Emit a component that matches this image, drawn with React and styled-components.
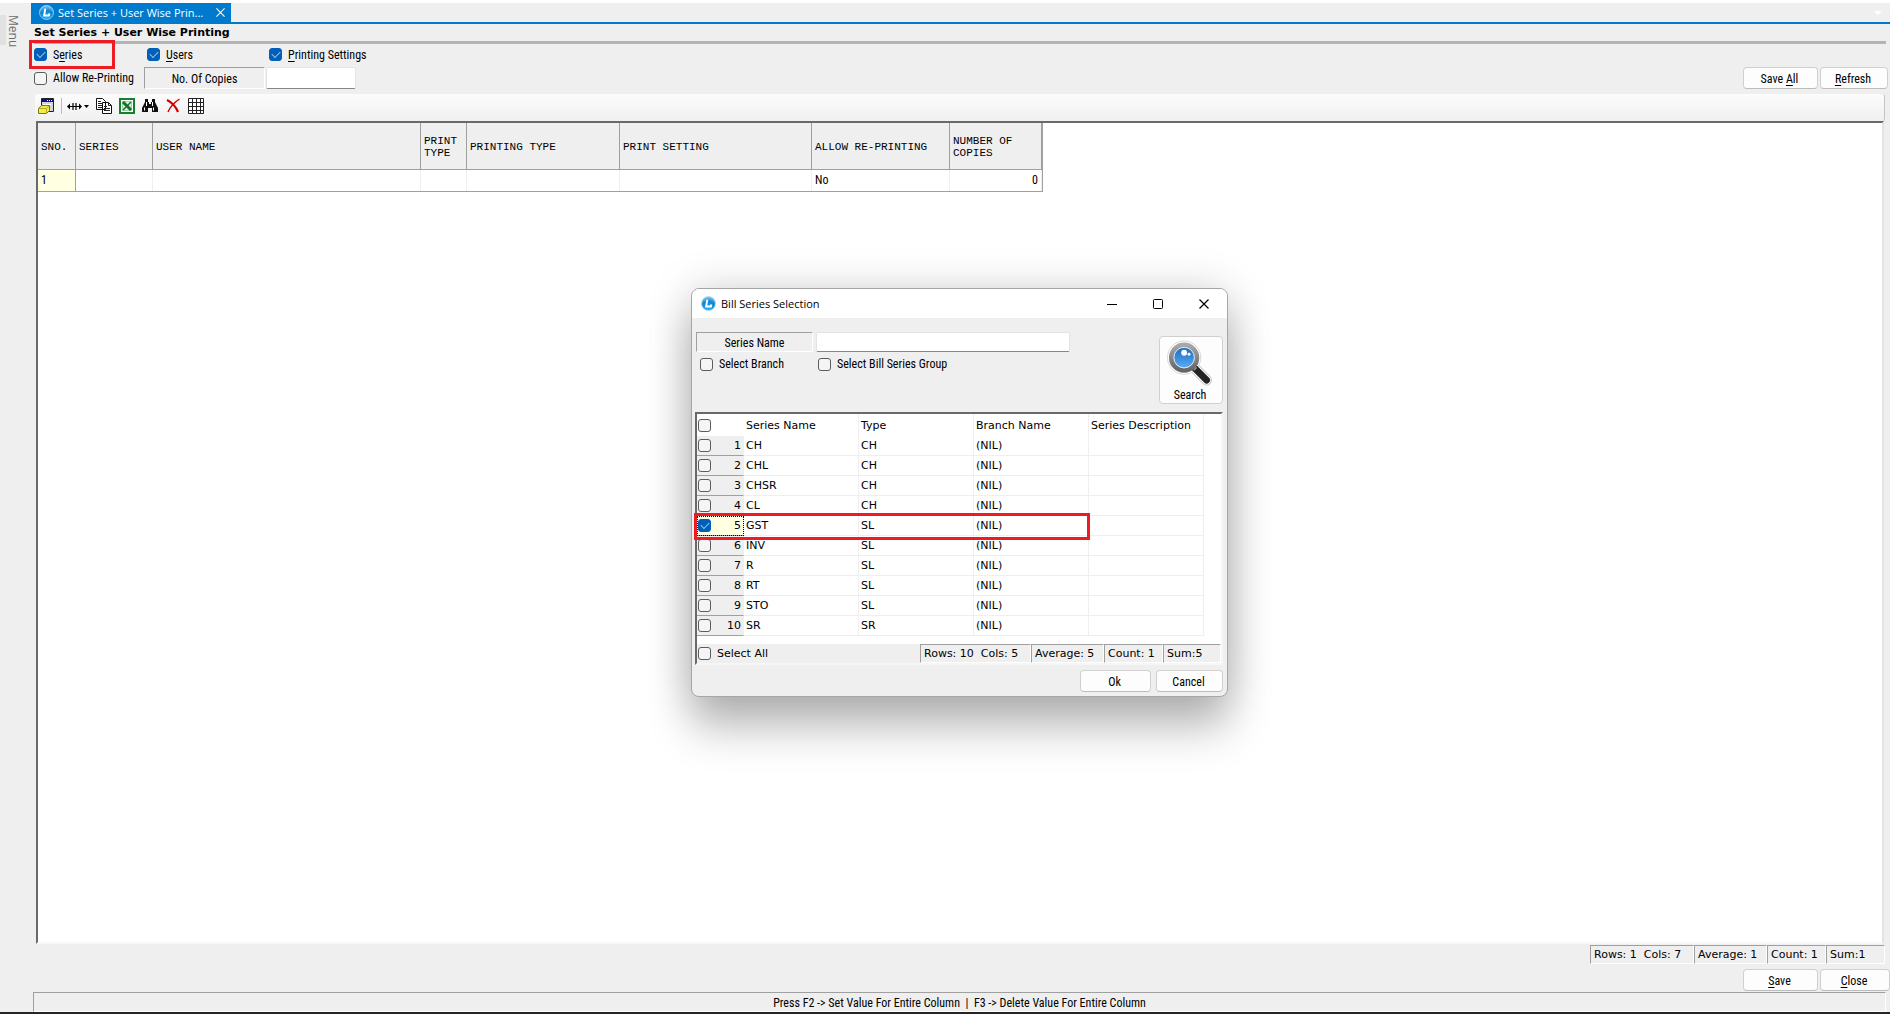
import React, { useState } from "react";
import styled, { createGlobalStyle, css } from "styled-components";

const ui = `"Roboto Condensed", Roboto, "Liberation Sans", sans-serif`;
const wide = `Verdana, "DejaVu Sans", sans-serif`;
const title = `"Segoe UI", "Open Sans", sans-serif`;
const mono = `"Courier New", "Liberation Mono", monospace`;

const c = {
  face: "#efefef",
  dark: "#a0a0a0",
  darker: "#696969",
  light: "#e3e3e3",
  blue: "#007acc",
  check: "#005fb8",
  red: "#ed1c24",
};

const Global = createGlobalStyle`
  * { box-sizing: border-box; }
  body { margin: 0; background: ${c.face}; color: #000; font: 12px/16px ${ui}; }
  button, input { font: inherit; color: inherit; }
`;

const Page = styled.div`
  display: flex;
  flex-direction: column;
  min-height: 100vh;
  border-top: 3px solid #fff;
  border-bottom: 2px solid #272425;
  background: ${c.face};
`;

const Workspace = styled.div`
  display: flex;
  flex: 1;
`;

const Rail = styled.nav`
  flex: 0 0 31px;
  padding-top: 12px;
`;

const MenuTab = styled.button`
  display: block;
  height: 30px;
  padding: 0 0 2px 1px;
  border: 0;
  border-left: 6px solid #e1e1e1;
  background: none;
  color: #6d6d6d;
  font: 12px/12px ${title};
  writing-mode: vertical-rl;
`;

const Screen = styled.main`
  display: flex;
  flex: 1;
  flex-direction: column;
  min-width: 0;
`;

const TabStrip = styled.div`
  display: flex;
  align-items: center;
  justify-content: space-between;
  height: 21px;
  padding-right: 8px;
  border-bottom: 2px solid ${c.blue};
`;

const Tab = styled.div`
  display: flex;
  align-items: center;
  width: 200px;
  height: 19px;
  padding: 0 5px 0 8px;
  background: ${c.blue};
  color: #fff;
  font: 11px/16px ${title};
  white-space: nowrap;
`;

const TabText = styled.span`
  flex: 1;
  margin-left: 4px;
`;

const GlyphButton = styled.button`
  display: grid;
  place-items: center;
  width: ${(p) => p.$w}px;
  height: ${(p) => p.$h}px;
  padding: 0;
  border: 0;
  background: none;
`;

const Heading = styled.h1`
  margin: 0 4px 0 3px;
  padding-top: 1px;
  border-bottom: 3px solid #b4b4b4;
  font: bold 11px/16px ${wide};
`;

const Options = styled.div`
  display: flex;
  flex-direction: column;
  height: 50px;
  padding: 0 2px 0 3px;
`;

const FlagRow = styled.div`
  display: grid;
  grid-template-columns: 113px 122px auto;
  align-items: center;
  height: 21px;
`;

const CopyRow = styled.div`
  display: flex;
  align-items: center;
  height: 26px;
`;

const Check = styled.label`
  position: relative;
  display: flex;
  align-items: center;
  gap: 6px;
  min-width: ${(p) => p.$w || 0}px;
  font: ${(p) => (p.$wide ? `11px/16px ${wide}` : "inherit")};
  white-space: nowrap;
`;

const markStyle = css`
  position: absolute;
  z-index: 1;
  border: 3px solid ${c.red};
  pointer-events: none;
  content: "";
`;

const MarkedCheck = styled(Check)`
  &::after {
    ${markStyle}
    inset: -7px 32px -6px -5px;
  }
`;

const Box = styled.input.attrs({ type: "checkbox" })`
  display: grid;
  flex: none;
  place-items: center;
  width: 13px;
  height: 13px;
  margin: 0;
  border: 1px solid #5c5c5c;
  border-radius: 3px;
  background: #f5f5f5;
  appearance: none;
  &:checked {
    border-color: ${c.check};
    background: ${c.check};
  }
  &:checked::after {
    width: 7px;
    height: 4px;
    margin-bottom: 2px;
    border: solid #9cc3e6;
    border-width: 0 0 1px 1px;
    transform: rotate(-45deg);
    content: "";
  }
`;

const Key = styled.span`
  text-decoration: underline;
  text-underline-offset: 2px;
`;

const Caption = styled.label`
  display: grid;
  place-items: center;
  width: ${(p) => p.$w}px;
  height: ${(p) => p.$h}px;
  padding-top: 2px;
  border: 1px solid;
  border-color: ${c.dark} #fff #fff ${c.dark};
`;

const Field = styled.input`
  width: ${(p) => p.$w}px;
  height: ${(p) => p.$h}px;
  margin-left: ${(p) => p.$gap}px;
  padding: 0 4px;
  border: 1px solid ${c.light};
  border-bottom-color: #868686;
  border-radius: 2px;
  background: #fff;
`;

const Actions = styled.div`
  display: flex;
  gap: ${(p) => p.$gap || 2}px;
  justify-content: flex-end;
  margin-left: auto;
`;

const Button = styled.button`
  width: ${(p) => p.$w}px;
  height: 22px;
  padding: 2px 2px 0 0;
  border: 1px solid #d0d0d0;
  border-bottom-color: #bcbcbc;
  border-radius: 4px;
  background: #fdfdfd;
  line-height: 16px;
`;

const Toolbar = styled.div`
  display: flex;
  align-items: center;
  gap: 7px;
  height: 27px;
  margin: 0 5px 0 4px;
  padding: 0 3px 4px;
  border-radius: 3px;
  background: linear-gradient(#fcfcfc, #f0f0f0);
  border-right: 1px solid #c4c4c4;
`;

const Divider = styled.span`
  width: 1px;
  height: 16px;
  margin-right: -2px;
  background: #bdbdbd;
`;

const Sheet = styled.section`
  flex: 1;
  margin: 0 6px 0 5px;
  border: 2px solid;
  border-color: ${c.darker} ${c.light} #f8f8f8 ${c.darker};
  background: #fff;
`;

const GridTable = styled.table`
  border-collapse: separate;
  border-spacing: 0;
  table-layout: fixed;
  width: 1005px;
  border-right: 1px solid ${c.dark};
  border-bottom: 1px solid ${c.dark};
`;

const GridHead = styled.th`
  height: 47px;
  padding: 1px 0 0 3px;
  border: solid ${c.dark};
  border-width: 0 1px 1px 0;
  background: ${c.face};
  font: 11px/12px ${mono};
  text-align: left;
`;

const GridCell = styled.td`
  height: 21px;
  padding: 0 3px 2px;
  border-right: 1px solid ${c.face};
  text-align: ${(p) => p.$align || "left"};
  ${(p) => p.$mark && css`
    border-color: ${c.dark};
    background: #ffffe1;
  `}
`;

const StatusLine = styled.div`
  display: flex;
  justify-content: flex-end;
  margin: ${(p) => (p.$page ? "1px 5px 5px 0" : "0")};
  font: 11px/16px ${wide};
`;

const Stat = styled.span`
  width: ${(p) => p.$w}px;
  padding: 1px 0 0 3px;
  border: 1px solid;
  border-color: ${c.dark} #fff #fff ${c.dark};
  white-space: pre;
`;

const Footer = styled.footer`
  height: 20px;
  margin: 1px 4px 0 2px;
  border: 1px solid;
  border-color: ${c.dark} #fff #fff ${c.dark};
  line-height: 20px;
  text-align: center;
  white-space: pre;
`;

const Window = styled.section`
  position: absolute;
  top: 288px;
  left: 691px;
  display: flex;
  flex-direction: column;
  width: 537px;
  border: 1px solid #a6a6a6;
  border-radius: 8px;
  background: ${c.face};
  box-shadow: 0 32px 44px rgba(0, 0, 0, 0.24), 0 2px 44px rgba(0, 0, 0, 0.18);
`;

const TitleBar = styled.header`
  display: flex;
  align-items: center;
  height: 29px;
  padding-left: 9px;
  border-radius: 7px 7px 0 0;
  background: #fff;
  font: 11px/16px ${title};
`;

const WindowTitle = styled.h2`
  flex: 1;
  margin: 0 0 0 5px;
  font: inherit;
`;

const SearchForm = styled.form`
  display: flex;
  justify-content: space-between;
  height: 94px;
  padding: 14px 4px 0;
`;

const Criteria = styled.div`
  display: flex;
  flex-direction: column;
  gap: 2px;
`;

const Line = styled.div`
  display: flex;
  align-items: center;
  height: 20px;
  padding-left: ${(p) => p.$inset || 0}px;
`;

const SearchButton = styled.button`
  display: flex;
  flex-direction: column;
  align-items: center;
  width: 64px;
  height: 68px;
  margin-top: 4px;
  padding: 3px 2px 0 0;
  border: 1px solid #d0d0d0;
  border-radius: 4px;
  background: #fdfdfd;
`;

const ListFrame = styled.div`
  margin: 0 4px 0 3px;
  border: 2px solid;
  border-color: ${c.darker} #f6f6f6 #f6f6f6 ${c.darker};
  background: #fff;
`;

const List = styled.table`
  border-collapse: separate;
  border-spacing: 0;
  table-layout: fixed;
  width: 507px;
  margin-bottom: 8px;
  font: 11px/16px ${wide};
`;

const ListHead = styled.th`
  height: 22px;
  padding: 1px 0 0 ${(p) => (p.$box ? 1 : 2)}px;
  border-right: 1px solid ${(p) => (p.$box ? "#fff" : c.face)};
  font-weight: normal;
  text-align: left;
  white-space: nowrap;
`;

const ListRow = styled.tr`
  position: relative;
  ${(p) => p.$marked && css`
    &::after {
      ${markStyle}
      inset: -3px 114px -4px -3px;
    }
  `}
`;

const ListCell = styled.td`
  height: 20px;
  padding: 0 0 0 2px;
  border: solid ${c.face};
  border-width: 0 1px 1px 0;
`;

const RowHead = styled.th`
  height: 20px;
  padding: 0;
  border-right: 1px solid ${c.face};
  border-bottom: 1px solid ${c.dark};
  background: ${(p) => (p.$on ? "#ffffe1" : c.face)};
  font-weight: normal;
  ${(p) => p.$on && css`
    outline: 1px dotted #000;
    outline-offset: -1px;
  `}
`;

const RowHeadInner = styled.label`
  display: flex;
  align-items: center;
  justify-content: space-between;
  padding: 0 2px 0 1px;
`;

const ListFoot = styled.div`
  display: flex;
  align-items: center;
  justify-content: space-between;
  padding-left: 1px;
  background: ${c.face};
`;

const WindowActions = styled(Actions)`
  margin: 5px 4px 4px 0;
`;

const Logo = ({ id }) => (
  <svg width="15" height="15" viewBox="0 0 15 15" aria-hidden="true">
    <defs>
      <radialGradient id={id} cx=".5" cy=".85" r=".9">
        <stop offset="0" stopColor="#27b4f5" />
        <stop offset=".55" stopColor="#0d83d6" />
        <stop offset="1" stopColor="#9fd6f7" />
      </radialGradient>
    </defs>
    <circle cx="7.500" cy="7.500" r="7" fill={`url(#${id})`} stroke="#a9dcf8" strokeWidth=".8" />
    <path d="M6.300 3.600 5.100 10.500h4.800l.4-2" fill="none" stroke="#fff" strokeWidth="1.900" />
  </svg>
);

const Cross = ({ size, color }) => (
  <svg width={size} height={size} viewBox="0 0 10 10" aria-hidden="true">
    <path d="M.5.5l9 9M9.500.5l-9 9" stroke={color} strokeWidth="1.200" />
  </svg>
);

const FormIcon = () => (
  <svg width="16" height="16" viewBox="0 0 16 16" aria-hidden="true">
    <path d="M3.500.5h12v13h-12z" fill="#d4d4d4" stroke="#222" />
    <path d="M3 1h12v3H3z" fill="#10108c" />
    <path d="M9 2.500h1M11 2.500h1M13 2.500h1" stroke="#fff" />
    <path d="M5 6.500h8" stroke="#fff" />
    <path d="M.5 10.500l3-3h8v5l-3 3h-8z" fill="#f2ea4a" stroke="#7d7a12" />
    <path d="M1 10.500h7.500v5M8.500 10.500l3-3" fill="none" stroke="#b5ae20" />
  </svg>
);
const WidthIcon = () => (
  <svg width="22" height="16" viewBox="0 0 22 16" aria-hidden="true">
    <path d="M1 8.500h13" stroke="#000" strokeWidth="1" />
    <path d="M6 5v7M9 5v7" stroke="#000" strokeWidth="1.200" />
    <path d="M0 8.500l3-3v6zM15 8.500l-3-3v6zM17 7h5l-2.500 3z" fill="#000" />
  </svg>
);
const CopyIcon = () => (
  <svg width="16" height="16" viewBox="0 0 16 16" aria-hidden="true">
    <path d="M.5.5h6l3 3v8h-9zM6.500 4.500h6l3 3v8h-9z" fill="#fff" stroke="#111" />
    <path d="M2 3.500h3M2 5.500h4M2 7.500h4M2 9.500h4M8 8.500h3M8 10.500h6M8 12.500h6M12.500 4.500v3h3" stroke="#222" fill="none" />
  </svg>
);
const ExcelIcon = () => (
  <svg width="16" height="16" viewBox="0 0 16 16" aria-hidden="true">
    <path d="M1 1h14v14H1z" fill="#fff" stroke="#14822a" strokeWidth="2" />
    <path d="M3.500 3.500h9v9h-9z" fill="#d8efd9" stroke="#5aa865" strokeDasharray="1 1" />
    <path d="M4 4l8 8" stroke="#14702a" strokeWidth="3" />
    <path d="M12 4l-8 8" stroke="#14702a" strokeWidth="1.500" />
  </svg>
);
const FindIcon = () => (
  <svg width="16" height="16" viewBox="0 0 16 16" aria-hidden="true">
    <path d="M3 1h3v3h1v2h2V4h1V1h3v3l3 6v4h-6v-4H6v4H0v-4l3-6z" fill="#111" />
    <path d="M2.500 9.500v3M4.500 4v4M10.500 4v4M11.500 9.500v3" stroke="#fff" />
  </svg>
);
const DeleteIcon = () => (
  <svg width="15" height="15" viewBox="0 0 15 15" aria-hidden="true">
    <path d="M1 2C5 4 10 9 12 14" fill="none" stroke="#d40000" strokeWidth="2.200" />
    <path d="M13.500 1C9 4 4 9 2 14" fill="none" stroke="#d40000" strokeWidth="1.500" />
  </svg>
);
const TableIcon = () => (
  <svg width="16" height="16" viewBox="0 0 16 16" aria-hidden="true">
    <path d="M.5.5h15v15H.5zM4.500 0v16M8.500 0v16M12.500 0v16M0 4.500h16M0 8.500h16M0 12.500h16" fill="#fff" stroke="#222" />
  </svg>
);
const LensIcon = () => (
  <svg width="48" height="48" viewBox="0 0 48 48" aria-hidden="true">
    <defs>
      <linearGradient id="glass" x1="0" y1="0" x2="0" y2="1">
        <stop offset="0" stopColor="#1463b4" />
        <stop offset="1" stopColor="#62b3ff" />
      </linearGradient>
      <linearGradient id="rim" x1="0" y1="0" x2="0" y2="1">
        <stop offset="0" stopColor="#a8a8a8" />
        <stop offset="1" stopColor="#666" />
      </linearGradient>
    </defs>
    <path d="M28 28L41 41" stroke="#ccc" strokeWidth="11" strokeLinecap="round" />
    <path d="M28 28L41 41" stroke="#fff" strokeWidth="9" strokeLinecap="round" />
    <circle cx="18" cy="18" r="17" fill="#fff" stroke="#d6d6d6" />
    <path d="M29 29L41 41" stroke="#242424" strokeWidth="7" strokeLinecap="round" />
    <path d="M26 26L30 30" stroke="#888" strokeWidth="4" />
    <circle cx="18" cy="18" r="13" fill="url(#glass)" stroke="url(#rim)" strokeWidth="5" />
    <circle cx="18" cy="18" r="10.500" fill="none" stroke="#e6f1fc" />
    <circle cx="18" cy="13" r="3" fill="#fff" />
    <circle cx="23" cy="14.500" r="1.500" fill="#fff" />
  </svg>
);

const tools = [
  ["Columns", 22, WidthIcon],
  ["Copy", 16, CopyIcon],
  ["Export to Excel", 16, ExcelIcon],
  ["Find", 16, FindIcon],
  ["Delete", 16, DeleteIcon],
  ["Table", 16, TableIcon],
];

const columns = [
  ["SNO.", 38],
  ["SERIES", 77],
  ["USER NAME", 268],
  ["PRINT TYPE", 46],
  ["PRINTING TYPE", 153],
  ["PRINT SETTING", 192],
  ["ALLOW RE-PRINTING", 138],
  ["NUMBER OF COPIES", 92],
];

const series = [
  ["CH", "CH"],
  ["CHL", "CH"],
  ["CHSR", "CH"],
  ["CL", "CH"],
  ["GST", "SL"],
  ["INV", "SL"],
  ["R", "SL"],
  ["RT", "SL"],
  ["STO", "SL"],
  ["SR", "SR"],
];

function Stats({ items, page }) {
  return (
    <StatusLine $page={page}>
      {items.map(([text, w]) => (
        <Stat key={text} $w={w}>{text}</Stat>
      ))}
    </StatusLine>
  );
}

function SeriesWindow() {
  const [picked, setPicked] = useState([4]);
  const toggle = (i) =>
    setPicked((p) => (p.includes(i) ? p.filter((x) => x !== i) : [...p, i]));
  return (
    <Window role="dialog" aria-labelledby="window-title">
      <TitleBar>
        <Logo id="logo-window" />
        <WindowTitle id="window-title">Bill Series Selection</WindowTitle>
        <GlyphButton $w={46} $h={29} aria-label="Minimize">
          <svg width="10" height="10" aria-hidden="true"><path d="M0 5.500h10" stroke="#000" /></svg>
        </GlyphButton>
        <GlyphButton $w={46} $h={29} aria-label="Maximize">
          <svg width="10" height="10" aria-hidden="true">
            <rect x=".5" y=".5" width="9" height="9" rx="1" fill="none" stroke="#000" />
          </svg>
        </GlyphButton>
        <GlyphButton $w={46} $h={29} aria-label="Close window"><Cross size={10} color="#000" /></GlyphButton>
      </TitleBar>
      <SearchForm onSubmit={(e) => e.preventDefault()}>
        <Criteria>
          <Line>
            <Caption htmlFor="series-name" $w={117} $h={20}>Series Name</Caption>
            <Field id="series-name" $w={254} $h={20} $gap={3} />
          </Line>
          <Line $inset={4}>
            <Check $w={118}><Box />Select Branch</Check>
            <Check><Box />Select Bill Series Group</Check>
          </Line>
        </Criteria>
        <SearchButton type="submit"><LensIcon />Search</SearchButton>
      </SearchForm>
      <ListFrame>
        <List>
          <colgroup>
            <col width="47" /><col width="115" /><col width="115" /><col width="115" /><col width="115" />
          </colgroup>
          <thead>
            <tr>
              <ListHead $box><Box aria-label="Select every row" /></ListHead>
              <ListHead>Series Name</ListHead>
              <ListHead>Type</ListHead>
              <ListHead>Branch Name</ListHead>
              <ListHead>Series Description</ListHead>
            </tr>
          </thead>
          <tbody>
            {series.map(([name, type], i) => (
              <ListRow key={name} $marked={name === "GST"}>
                <RowHead scope="row" $on={picked.includes(i)}>
                  <RowHeadInner>
                    <Box checked={picked.includes(i)} onChange={() => toggle(i)} />
                    {i + 1}
                  </RowHeadInner>
                </RowHead>
                <ListCell>{name}</ListCell>
                <ListCell>{type}</ListCell>
                <ListCell>(NIL)</ListCell>
                <ListCell />
              </ListRow>
            ))}
          </tbody>
        </List>
        <ListFoot>
          <Check $wide><Box />Select All</Check>
          <Stats items={[["Rows: 10  Cols: 5", 111], ["Average: 5", 73], ["Count: 1", 59], ["Sum:5", 58]]} />
        </ListFoot>
      </ListFrame>
      <WindowActions $gap={5}>
        <Button $w={71}>Ok</Button>
        <Button $w={67}>Cancel</Button>
      </WindowActions>
    </Window>
  );
}

export default function App() {
  return (
    <>
      <Global />
      <Page>
        <Workspace>
          <Rail><MenuTab>Menu</MenuTab></Rail>
          <Screen>
            <TabStrip>
              <Tab>
                <Logo id="logo-tab" />
                <TabText>Set Series + User Wise Prin...</TabText>
                <GlyphButton $w={12} $h={12} aria-label="Close tab"><Cross size={9} color="#fff" /></GlyphButton>
              </Tab>
              <svg width="8" height="4" aria-hidden="true"><path d="M0 0h8l-4 4z" fill="#fff" /></svg>
            </TabStrip>
            <Heading>Set Series + User Wise Printing</Heading>
            <Options>
              <FlagRow>
                <MarkedCheck><Box defaultChecked /><span>S<Key>e</Key>ries</span></MarkedCheck>
                <Check><Box defaultChecked /><span><Key>U</Key>sers</span></Check>
                <Check><Box defaultChecked /><span><Key>P</Key>rinting Settings</span></Check>
              </FlagRow>
              <CopyRow>
                <Check $w={110}><Box />Allow Re-Printing</Check>
                <Caption htmlFor="copies" $w={121} $h={22}>No. Of Copies</Caption>
                <Field id="copies" $w={90} $h={22} $gap={1} />
                <Actions>
                  <Button $w={75}>Save <Key>A</Key>ll</Button>
                  <Button $w={68}><Key>R</Key>efresh</Button>
                </Actions>
              </CopyRow>
            </Options>
            <Toolbar>
              <GlyphButton $w={16} $h={16} aria-label="Form"><FormIcon /></GlyphButton>
              <Divider />
              {tools.map(([label, w, Icon]) => (
                <GlyphButton key={label} $w={w} $h={16} aria-label={label}><Icon /></GlyphButton>
              ))}
            </Toolbar>
            <Sheet>
              <GridTable>
                <colgroup>
                  {columns.map(([name, w]) => <col key={name} width={w} />)}
                </colgroup>
                <thead>
                  <tr>{columns.map(([name]) => <GridHead key={name}>{name}</GridHead>)}</tr>
                </thead>
                <tbody>
                  <tr>
                    <GridCell $mark>1</GridCell>
                    <GridCell /><GridCell /><GridCell /><GridCell /><GridCell />
                    <GridCell>No</GridCell>
                    <GridCell $align="right">0</GridCell>
                  </tr>
                </tbody>
              </GridTable>
            </Sheet>
            <Stats page items={[["Rows: 1  Cols: 7", 104], ["Average: 1", 73], ["Count: 1", 59], ["Sum:1", 59]]} />
            <Actions>
              <Button $w={75}><Key>S</Key>ave</Button>
              <Button $w={70}><Key>C</Key>lose</Button>
            </Actions>
            <Footer>Press F2 -&gt; Set Value For Entire Column  |  F3 -&gt; Delete Value For Entire Column</Footer>
          </Screen>
        </Workspace>
      </Page>
      <SeriesWindow />
    </>
  );
}
